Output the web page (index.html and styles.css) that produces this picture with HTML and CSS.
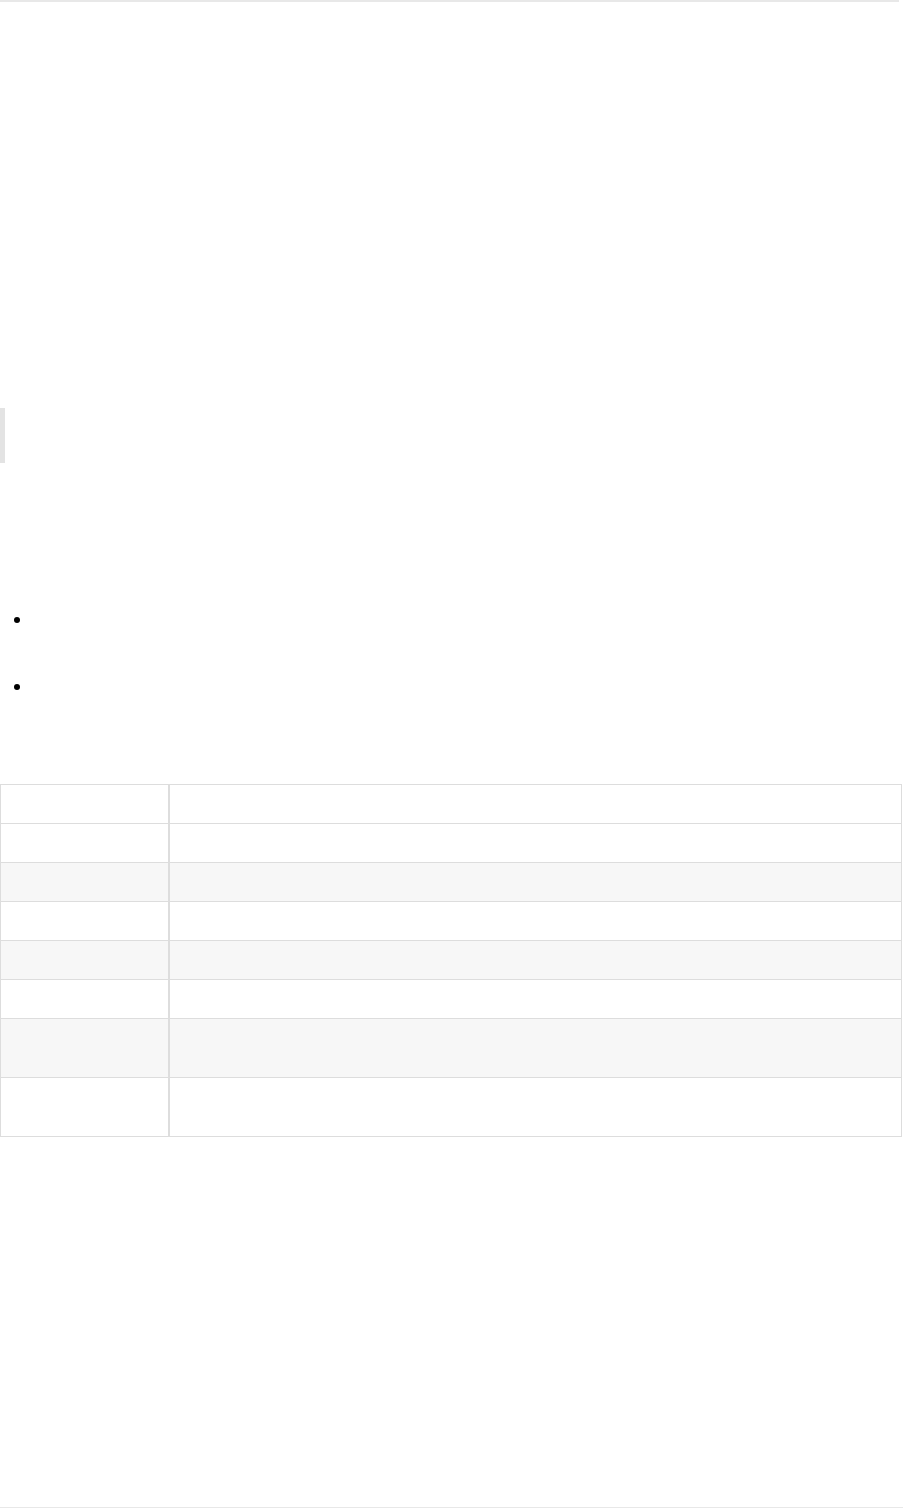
FILE: index.html
```html
<!DOCTYPE html>
<html lang="en">
<head>
<meta charset="utf-8">
<title>Document</title>
<link rel="stylesheet" href="styles.css">
</head>
<body>
<main class="doc">
  <hr class="rule">
  <blockquote class="quote"><p class="quote-line">&nbsp;</p></blockquote>
  <ul class="list">
    <li class="item">&nbsp;</li>
    <li class="item">&nbsp;</li>
  </ul>
  <table class="grid">
    <thead>
      <tr><th class="key">&nbsp;</th><th class="val">&nbsp;</th></tr>
    </thead>
    <tbody>
      <tr><td class="key">&nbsp;</td><td class="val">&nbsp;</td></tr>
      <tr><td class="key">&nbsp;</td><td class="val">&nbsp;</td></tr>
      <tr><td class="key">&nbsp;</td><td class="val">&nbsp;</td></tr>
      <tr><td class="key">&nbsp;</td><td class="val">&nbsp;</td></tr>
      <tr><td class="key">&nbsp;</td><td class="val">&nbsp;</td></tr>
      <tr><td class="key">&nbsp;<br>&nbsp;</td><td class="val">&nbsp;<br>&nbsp;</td></tr>
      <tr><td class="key">&nbsp;<br>&nbsp;</td><td class="val">&nbsp;<br>&nbsp;</td></tr>
    </tbody>
  </table>
  <hr class="rule rule-bottom">
</main>
</body>
</html>
```

FILE: styles.css
```css
html, body {
  margin: 0;
  padding: 0;
  background: #ffffff;
}

body {
  font-family: "Liberation Sans", Arial, sans-serif;
  font-size: 14px;
  line-height: 20px;
  color: #333333;
}

.doc {
  width: 903px;
  display: flex;
  flex-direction: column;
}

.rule {
  margin: 0;
  border: 0;
  height: 2px;
  background: #e8e8e8;
  width: 899px;
}

.rule-bottom {
  width: 903px;
  margin-top: 370px;
}

.quote {
  margin: 406px 0 0 0;
  padding: 17px 16px 18px 16px;
  border-left: 5px solid #e3e3e3;
}

.quote-line {
  margin: 0;
}

.list {
  margin: 146px 0 0 0;
  padding: 0 0 0 33px;
  font-size: 21px;
  color: #000000;
}

.item {
  line-height: 20px;
  margin-bottom: 47px;
}

.item:last-child {
  margin-bottom: 0;
}

.grid {
  margin-top: 88px;
  width: 902px;
  border-collapse: collapse;
  border-spacing: 0;
}

.grid th,
.grid td {
  border: 1px solid #dddddd;
  padding: 9px 13px;
  text-align: left;
  font-weight: normal;
  line-height: 20px;
}

.grid .key {
  width: 141px;
  border-right-width: 2px;
}

.grid tr {
  background: #ffffff;
}

.grid tbody tr:nth-child(2n) {
  background: #f7f7f7;
}
```
